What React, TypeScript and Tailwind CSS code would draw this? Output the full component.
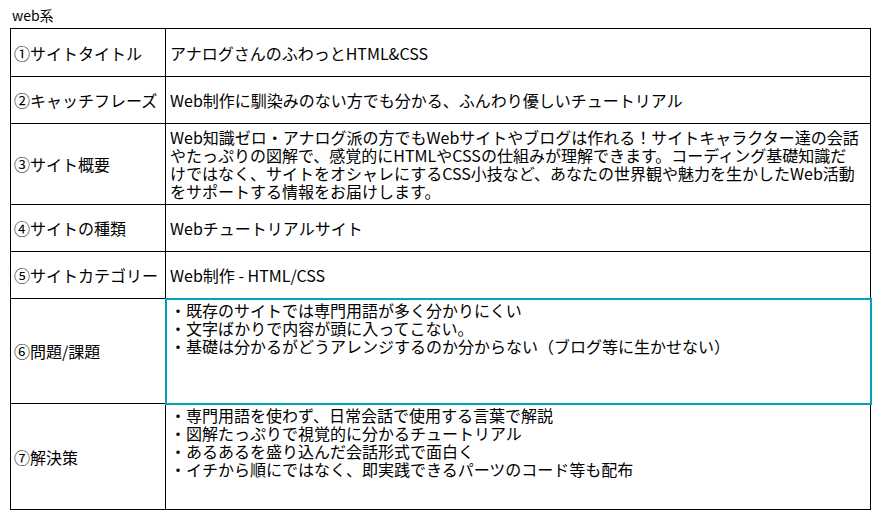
import React from 'react'

const font = { fontFamily: '"Noto Sans CJK JP", "Noto Sans", sans-serif' }

type Row = {
  label: string
  lines: string[]
  h: string
  top?: boolean
  selected?: boolean
}

const rows: Row[] = [
  { label: '①サイトタイトル', lines: ['アナログさんのふわっとHTML&CSS'], h: 'h-[48px]' },
  { label: '②キャッチフレーズ', lines: ['Web制作に馴染みのない方でも分かる、ふんわり優しいチュートリアル'], h: 'h-[47px]' },
  {
    label: '③サイト概要',
    lines: [
      'Web知識ゼロ・アナログ派の方でもWebサイトやブログは作れる！サイトキャラクター達の会話',
      'やたっぷりの図解で、感覚的にHTMLやCSSの仕組みが理解できます。コーディング基礎知識だ',
      'けではなく、サイトをオシャレにするCSS小技など、あなたの世界観や魅力を生かしたWeb活動',
      'をサポートする情報をお届けします。',
    ],
    h: 'h-[81px]',
  },
  { label: '④サイトの種類', lines: ['Webチュートリアルサイト'], h: 'h-[47px]' },
  { label: '⑤サイトカテゴリー', lines: ['Web制作 - HTML/CSS'], h: 'h-[47px]' },
  {
    label: '⑥問題/課題',
    lines: [
      '・既存のサイトでは専門用語が多く分かりにくい',
      '・文字ばかりで内容が頭に入ってこない。',
      '・基礎は分かるがどうアレンジするのか分からない（ブログ等に生かせない）',
    ],
    h: 'h-[105px]',
    top: true,
    selected: true,
  },
  {
    label: '⑦解決策',
    lines: [
      '・専門用語を使わず、日常会話で使用する言葉で解説',
      '・図解たっぷりで視覚的に分かるチュートリアル',
      '・あるあるを盛り込んだ会話形式で面白く',
      '・イチから順にではなく、即実践できるパーツのコード等も配布',
    ],
    h: 'h-[106px]',
    top: true,
  },
]

export default function App() {
  return (
    <div className="w-[880px] h-[521px] bg-white text-black overflow-hidden" style={font}>
      <div className="pl-[12px] pt-[6px] h-[28px] text-[14px] leading-[18px]">web系</div>
      <table className="ml-[10px] table-fixed border-collapse w-[860px]">
        <colgroup>
          <col className="w-[155px]" />
          <col className="w-[705px]" />
        </colgroup>
        <tbody>
          {rows.map((r) => (
            <tr key={r.label} className={r.h}>
              <td className="border border-black px-[3px] align-middle text-[16px] leading-[18px] whitespace-nowrap">
                {r.label}
              </td>
              <td
                className={
                  'border border-black px-[4px] text-[16px] leading-[18px] ' +
                  (r.top ? 'align-top pt-[2px] ' : 'align-middle ') +
                  (r.selected ? 'outline-2 outline-solid outline-[#00a3ba] -outline-offset-1' : '')
                }
              >
                {r.lines.map((l) => (
                  <span key={l} className="block whitespace-nowrap">
                    {l}
                  </span>
                ))}
              </td>
            </tr>
          ))}
        </tbody>
      </table>
    </div>
  )
}
